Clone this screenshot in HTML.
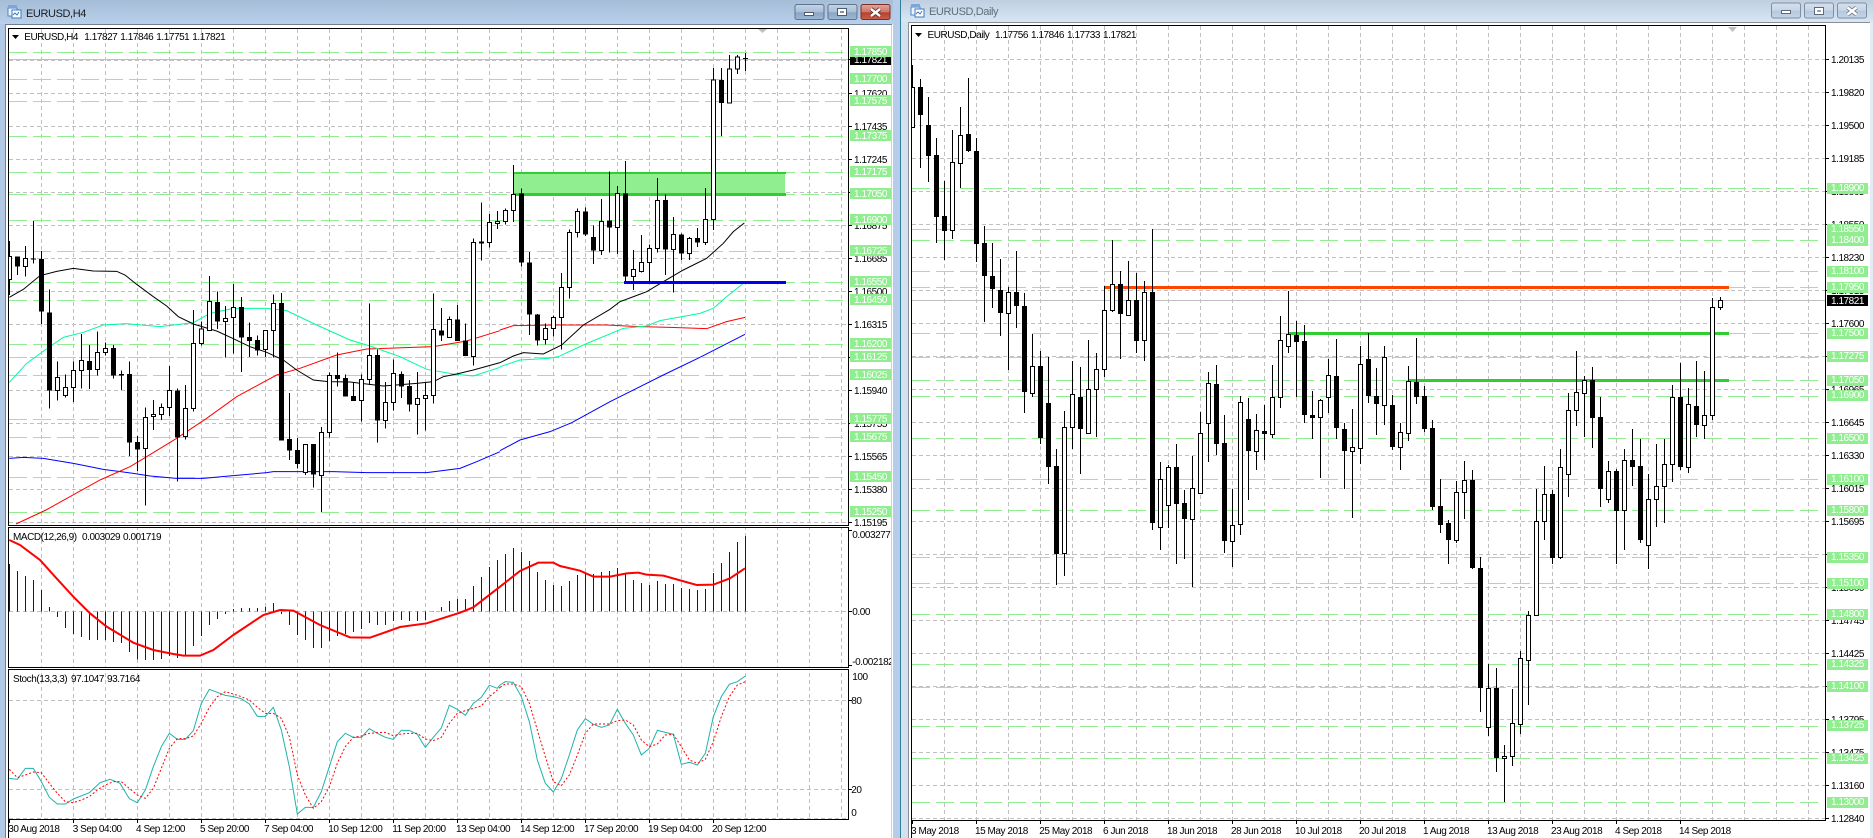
<!DOCTYPE html>
<html><head><meta charset="utf-8"><title>EURUSD charts</title>
<style>
html,body{margin:0;padding:0;background:#fff;width:1873px;height:838px;overflow:hidden}
svg{display:block;position:absolute;left:0;top:0}
svg path,svg polyline,svg rect,svg line{vector-effect:non-scaling-stroke}
text{font-family:"Liberation Sans",Arial,sans-serif;font-size:10px;letter-spacing:-.45px;fill:#000}
.w text{fill:#fff}
.grid{fill:none;stroke:#c0c0c0;stroke-width:1;stroke-dasharray:4 3;shape-rendering:crispEdges}
.lvl{fill:none;stroke:#90ee90;stroke-width:1;stroke-dasharray:18 6;shape-rendering:crispEdges}
.wk{fill:none;stroke:#000;stroke-width:1;shape-rendering:crispEdges}
.bk{fill:#000;shape-rendering:crispEdges}
.wh{fill:#fff;stroke:#000;stroke-width:1;shape-rendering:crispEdges}
.ln{fill:none;stroke-width:1}
.ax{fill:none;stroke:#000;stroke-width:1;shape-rendering:crispEdges}
.lb{fill:#90ee90}
</style></head><body>
<svg width="1873" height="838" viewBox="0 0 1873 838" xmlns="http://www.w3.org/2000/svg">
<defs>
<linearGradient id="tA" x1="0" y1="0" x2="0" y2="1"><stop offset="0" stop-color="#a6bdd7"/><stop offset="1" stop-color="#b8d0eb"/></linearGradient>
<linearGradient id="tI" x1="0" y1="0" x2="0" y2="1"><stop offset="0" stop-color="#bfcfdf"/><stop offset="1" stop-color="#d8e6f4"/></linearGradient>
<linearGradient id="bA" x1="0" y1="0" x2="0" y2="1"><stop offset="0" stop-color="#c6d4e6"/><stop offset=".5" stop-color="#a9bdd6"/><stop offset=".55" stop-color="#8ba5c6"/><stop offset="1" stop-color="#9db7d6"/></linearGradient>
<linearGradient id="bR" x1="0" y1="0" x2="0" y2="1"><stop offset="0" stop-color="#e0a89e"/><stop offset=".5" stop-color="#cf7465"/><stop offset=".55" stop-color="#b8412f"/><stop offset="1" stop-color="#c9604c"/></linearGradient>
<linearGradient id="bI" x1="0" y1="0" x2="0" y2="1"><stop offset="0" stop-color="#d6e1ee"/><stop offset=".5" stop-color="#c5d4e5"/><stop offset=".55" stop-color="#b5c8dd"/><stop offset="1" stop-color="#c4d6e9"/></linearGradient>
</defs>

<!-- frames -->
<rect x="0" y="0" width="1873" height="838" fill="#fff"/>
<rect x="0" y="0" width="893" height="24" fill="url(#tA)"/>
<rect x="0" y="24" width="5" height="814" fill="#b2cae6"/>
<rect x="893" y="0" width="7" height="838" fill="#b5cde8"/>
<rect x="5" y="24" width="887" height="1" fill="#6f7f8f"/>
<rect x="5" y="24" width="1" height="814" fill="#6f7f8f"/>
<rect x="891" y="25" width="1" height="813" fill="#d0d0d0"/>
<rect x="900" y="0" width="1" height="838" fill="#2f7f9a"/>
<rect x="901" y="0" width="972" height="22" fill="url(#tI)"/>
<rect x="901" y="22" width="7" height="816" fill="#d3e2f1"/>
<rect x="908" y="22" width="962" height="1" fill="#8a8f95"/>
<rect x="908" y="22" width="1" height="816" fill="#8a8f95"/>
<rect x="1870" y="22" width="3" height="816" fill="#e3ebf5"/>

<!-- title bars -->
<g>
<rect x="8" y="8" width="9" height="8" fill="#eef4fb" stroke="#4f86c6"/><rect x="8" y="5" width="9" height="3" fill="#7aa6dc"/>
<rect x="12" y="10" width="9" height="8" fill="#fff" stroke="#3f78be"/><path d="M13 15l2-2 2 2 2-3" fill="none" stroke="#3f78be"/>
<text x="26" y="17" style="font-size:11px;letter-spacing:-.4px;fill:#1c1c1c">EURUSD,H4</text>
<rect x="911" y="7" width="9" height="8" fill="#eef4fb" stroke="#4f86c6"/><rect x="911" y="4" width="9" height="3" fill="#7aa6dc"/>
<rect x="915" y="9" width="9" height="8" fill="#fff" stroke="#3f78be"/><path d="M916 14l2-2 2 2 2-3" fill="none" stroke="#3f78be"/>
<text x="929" y="15" style="font-size:11px;letter-spacing:-.4px;fill:#5f6d7c">EURUSD,Daily</text>
</g>
<!-- window buttons active -->
<rect x="795" y="4.500" width="29" height="15" rx="2" fill="url(#bA)" stroke="#5f748d"/>
<rect x="804.500" y="12.500" width="9" height="3" fill="#fff" stroke="#4c5c6e"/>
<rect x="828" y="4.500" width="29" height="15" rx="2" fill="url(#bA)" stroke="#5f748d"/>
<rect x="837.500" y="8.500" width="9" height="7" fill="#fff" stroke="#4c5c6e"/><rect x="840" y="11" width="4" height="2" fill="#7d95b2"/>
<rect x="861" y="4.500" width="29" height="15" rx="2" fill="url(#bR)" stroke="#7a2e24"/>
<path d="M871 9l9 7M880 9l-9 7" stroke="#5a2a22" stroke-width="4" fill="none"/><path d="M871 9l9 7M880 9l-9 7" stroke="#fff" stroke-width="2.400" fill="none"/>
<!-- window buttons inactive -->
<rect x="1771.500" y="3" width="29" height="15" rx="2" fill="url(#bI)" stroke="#7e8fa2"/>
<rect x="1781.500" y="10.500" width="9" height="3" fill="#fff" stroke="#5d6a79"/>
<rect x="1804.500" y="3" width="29" height="15" rx="2" fill="url(#bI)" stroke="#7e8fa2"/>
<rect x="1814.500" y="7.500" width="9" height="7" fill="#fff" stroke="#5d6a79"/><rect x="1817" y="10" width="4" height="2" fill="#93a6bb"/>
<rect x="1837.500" y="3" width="29" height="15" rx="2" fill="url(#bI)" stroke="#7e8fa2"/>
<path d="M1847.500 7.500l9 7M1856.500 7.500l-9 7" stroke="#6d7885" stroke-width="4" fill="none"/><path d="M1847.500 7.500l9 7M1856.500 7.500l-9 7" stroke="#fff" stroke-width="2.400" fill="none"/>

<!-- LEFT grid -->
<path class="grid" d="M9 60.500H848M9 93.500H848M9 126.500H848M9 159.500H848M9 192.500H848M9 225.500H848M9 258.500H848M9 291.500H848M9 324.500H848M9 357.500H848M9 390.500H848M9 423.500H848M9 456.500H848M9 489.500H848M9 522.500H848M9 611.500H848M9 700.500H848M9 789.500H848M9 818.500H848"/>
<path class="grid" d="M41.500 29V819M73.500 29V819M105.500 29V819M137.500 29V819M169.500 29V819M201.500 29V819M233.500 29V819M265.500 29V819M297.500 29V819M329.500 29V819M361.500 29V819M393.500 29V819M425.500 29V819M457.500 29V819M489.500 29V819M521.500 29V819M553.500 29V819M585.500 29V819M617.500 29V819M649.500 29V819M681.500 29V819M713.500 29V819M745.500 29V819M777.500 29V819M809.500 29V819M841.500 29V819"/>
<path d="M9 59.500H848" stroke="#c0c0c0" fill="none" shape-rendering="crispEdges"/>
<path class="lvl" d="M9 52.500H843M9 79.500H843M9 101.500H843M9 136.500H843M9 172.500H843M9 194.500H843M9 220.500H843M9 251.500H843M9 282.500H843M9 300.500H843M9 344.500H843M9 357.500H843M9 375.500H843M9 419.500H843M9 437.500H843M9 477.500H843M9 512.500H843"/>
<!-- rectangle zone -->
<rect x="513" y="172" width="272" height="22" fill="#90ee90"/>
<rect x="513" y="172" width="273" height="2" fill="#32cd32"/>
<rect x="513" y="193" width="273" height="3" fill="#32cd32"/>

<!-- MAs -->
<g transform="translate(0 180) scale(.33333)">
<polyline class="ln" stroke="#0000ff" points="28,835 70,832 130,835 220,850 310,868 400,880 450,888 530,895 610,895 700,887 800,878 820,875 1000,875 1100,878 1280,878 1380,865 1430,845 1500,815"/>
<polyline class="ln" stroke="#ff0000" points="48,1032 138,990 300,900 390,860 440,830 530,775 620,715 710,650 830,585 900,565 1010,525 1100,507 1300,500 1400,483 1500,452"/>
<polyline class="ln" stroke="#00fa9a" points="28,607 80,550 135,510 190,472 250,457 310,435 380,431 480,440 580,428 630,400 700,385 800,385 860,392 950,435 1050,480 1110,498 1200,530 1280,568 1360,582 1420,588 1500,562"/>
<polyline class="ln" stroke="#000" points="28,352 70,328 120,287 170,274 220,265 280,273 350,274 375,285 410,313 460,350 500,378 535,410 580,432 650,453 700,476 750,500 800,517 850,540 890,570 940,600 985,605 1050,606 1150,618 1250,610 1300,605 1330,590 1370,582 1420,570 1500,548"/>
</g>
<g transform="translate(500 100) scale(.33333)">
<polyline class="ln" stroke="#0000ff" points="0,1052 60,1020 150,995 215,968 330,905 490,825 600,772 735,703"/>
<polyline class="ln" stroke="#ff0000" points="0,690 40,677 160,675 320,675 420,680 510,682 620,686 680,665 735,652"/>
<polyline class="ln" stroke="#00fa9a" points="0,800 60,780 145,775 175,770 250,735 370,685 440,678 480,662 600,640 640,625 680,590 730,550"/>
<polyline class="ln" stroke="#000" points="0,788 40,768 70,758 130,762 185,735 250,675 330,628 360,605 440,575 490,545 550,510 620,475 670,430 700,395 733,369"/>
</g>

<!-- LEFT candles A -->
<g transform="translate(0 180) scale(1 .33333)">
<path class="wk" d="M9.500 183V345M17.500 229V285M25.500 198V290M33.500 123V250M41.500 213V432M49.500 328V686M57.500 544V662M65.500 583V653M73.500 545V666M81.500 462V625M89.500 495V627M97.500 454V587M105.500 488V527M113.500 495V596M121.500 571V630M129.500 544V828M137.500 768V873M145.500 682V977M153.500 660V750M161.500 670V720M169.500 558V708M177.500 625V905M185.500 615V779M193.500 390V695M201.500 425V497M209.500 288V451M217.500 334V447M225.500 378V533M233.500 312V520M241.500 351V576M249.500 427V531M257.500 467V527M265.500 451V531M273.500 343V533M281.500 339V782M289.500 639V840M297.500 774V866M305.500 793V885M313.500 793V923M321.500 741V996M329.500 578V773M337.500 517V620M345.500 583V650M353.500 607V663M361.500 583V725M369.500 370V615M377.500 508V788M385.500 606V746M393.500 538V692M401.500 574V654M409.500 600V695M417.500 576V764M425.500 608V752M433.500 340V671M441.500 384V483M449.500 410V473M457.500 375V483M465.500 430V528M473.500 175V557M481.500 67V242M489.500 102V203M497.500 93V147"/>
<path class="bk" d="M15 229h5V260h-5zM31 235h5V239h-5zM39 237h5V395h-5zM47 397h5V632h-5zM87 543h5V570h-5zM111 504h5V587h-5zM119 582h5V587h-5zM127 582h5V788h-5zM135 786h5V809h-5zM175 632h5V773h-5zM215 366h5V425h-5zM239 381h5V473h-5zM247 471h5V483h-5zM255 480h5V511h-5zM279 369h5V782h-5zM287 777h5V812h-5zM295 810h5V852h-5zM311 792h5V884h-5zM335 585h5V597h-5zM343 594h5V650h-5zM351 648h5V663h-5zM375 525h5V722h-5zM399 582h5V620h-5zM407 618h5V674h-5zM439 451h5V467h-5zM455 418h5V483h-5zM463 481h5V528h-5zM479 184h5V190h-5z"/>
<path class="wh" d="M7.500 229h4V298h-4zM23.500 236h4V259h-4zM55.500 592h4V632h-4zM63.500 622h4V647h-4zM71.500 571h4V622h-4zM79.500 541h4V571h-4zM95.500 517h4V569h-4zM103.500 505h4V517h-4zM143.500 712h4V806h-4zM151.500 703h4V709h-4zM159.500 682h4V704h-4zM167.500 631h4V682h-4zM183.500 685h4V770h-4zM191.500 490h4V686h-4zM199.500 447h4V491h-4zM207.500 364h4V451h-4zM223.500 415h4V425h-4zM231.500 382h4V412h-4zM263.500 451h4V509h-4zM271.500 370h4V451h-4zM303.500 793h4V877h-4zM319.500 757h4V886h-4zM327.500 586h4V758h-4zM359.500 598h4V661h-4zM367.500 526h4V598h-4zM383.500 667h4V721h-4zM391.500 580h4V667h-4zM415.500 655h4V673h-4zM423.500 646h4V655h-4zM431.500 448h4V646h-4zM447.500 418h4V473h-4zM471.500 187h4V529h-4zM487.500 127h4V187h-4zM495.500 124h4V130h-4z"/>
</g>
<!-- LEFT candles B -->
<g transform="translate(0 100) scale(1 .33333)">
<path class="wk" d="M505.500 325V374M513.500 195V366M521.500 265V500M529.500 456V705M537.500 642V737M545.500 670V734M553.500 646V710M561.500 519V748M569.500 388V596M577.500 325V413M585.500 322V408M593.500 376V492M601.500 297V465M609.500 215V458M617.500 258V462M625.500 183V552M633.500 450V570M641.500 405V518M649.500 433V552M657.500 234V458M665.500 283V525M673.500 351V578M681.500 400V480M689.500 411V480M697.500 384V441M705.500 264V435M713.500 -96V390M721.500 -96V108M729.500 -135V9M737.500 -135V-78M745.500 -141V-87"/>
<path class="bk" d="M519 280h5V488h-5zM527 487h5V644h-5zM535 643h5V722h-5zM583 334h5V404h-5zM591 411h5V452h-5zM607 361h5V383h-5zM623 280h5V530h-5zM663 300h5V449h-5zM679 403h5V461h-5zM695 414h5V428h-5zM719 -60h5V9h-5zM743 -126h5V-123h-5z"/>
<path class="wh" d="M503.500 331h4V364h-4zM511.500 283h4V331h-4zM543.500 686h4V718h-4zM551.500 652h4V685h-4zM559.500 563h4V652h-4zM567.500 397h4V563h-4zM575.500 334h4V397h-4zM599.500 364h4V451h-4zM615.500 280h4V383h-4zM631.500 508h4V529h-4zM639.500 487h4V514h-4zM647.500 445h4V487h-4zM655.500 301h4V445h-4zM671.500 403h4V449h-4zM687.500 415h4V460h-4zM703.500 358h4V428h-4zM711.500 -60h4V358h-4zM727.500 -93h4V9h-4zM735.500 -129h4V-93h-4z"/>
</g>
<rect x="624" y="281" width="162" height="3" fill="#0000ee"/>
<polygon points="758,29 767,29 762.500,33" fill="#c0c0c0"/>

<!-- MACD -->
<g transform="translate(0 500) scale(1 .33333)">
<path fill="none" stroke="#0000ee" stroke-width="1" shape-rendering="crispEdges" d="M9.500 334V192M17.500 334V213M25.500 334V228M33.500 334V240M41.500 334V270M49.500 334V321M57.500 334V351M65.500 334V384M73.500 334V402M81.500 334V411M89.500 334V420M97.500 334V420M105.500 334V420M113.500 334V426M121.500 334V429M129.500 334V456M137.500 334V478M145.500 334V480M153.500 334V480M161.500 334V477M169.500 334V468M177.500 334V474M185.500 334V468M193.500 334V438M201.500 334V408M209.500 334V375M217.500 334V357M225.500 334V342M233.500 334V327M241.500 334V324M249.500 334V324M257.500 334V324M265.500 334V321M273.500 334V309M281.500 334V342M289.500 334V375M297.500 334V405M305.500 334V420M313.500 334V444M321.500 334V444M329.500 334V423M337.500 334V408M345.500 334V402M353.500 334V396M361.500 334V387M369.500 334V369M377.500 334V375M385.500 334V375M393.500 334V363M401.500 334V360M409.500 334V363M417.500 334V363M425.500 334V360M433.500 334V336M441.500 334V321M449.500 334V303M457.500 334V297M465.500 334V297M473.500 334V258M481.500 334V231M489.500 334V201M497.500 334V180M505.500 334V162M513.500 334V144M521.500 334V156M529.500 334V183M537.500 334V216M545.500 334V240M553.500 334V255M561.500 334V258M569.500 334V243M577.500 334V225M585.500 334V219M593.500 334V222M601.500 334V216M609.500 334V213M617.500 334V204M625.500 334V222M633.500 334V240M641.500 334V249M649.500 334V255M657.500 334V243M665.500 334V252M673.500 334V252M681.500 334V264M689.500 334V267M697.500 334V270M705.500 334V267M713.500 334V219M721.500 334V189M729.500 334V156M737.500 334V126M745.500 334V108"/>
</g>
<g transform="translate(0 500) scale(.33333)">
<polyline fill="none" stroke="#ff0000" stroke-width="2" points="28,120 60,135 120,180 165,230 220,290 270,340 320,380 400,428 460,450 520,462 550,467 600,467 640,450 700,405 790,345 840,330 880,332 960,375 1050,412 1110,413 1200,381 1280,370 1380,338 1420,322 1500,260"/>
<polyline class="ln" stroke="#20b2aa" points="28,835 52,838 76,805 100,805 124,845 148,892 172,912 196,912 220,897 268,878 300,848 330,838 360,850 388,896 412,908 436,870 460,800 484,740 508,700 532,718 556,718 580,692 604,610 628,568 676,586 700,590 724,596 748,612 772,649 796,649 820,622 844,690 868,800 892,942 916,922 940,922 964,875 988,800 1012,725 1036,700 1060,712 1084,712 1108,686 1132,700 1156,712 1180,718 1204,691 1228,691 1252,703 1276,742 1300,712 1324,684 1348,616 1372,628 1396,646 1420,610 1444,592 1468,556 1492,565 1500,555"/>
<polyline class="ln" stroke="#ff0000" stroke-dasharray="2 2" points="28,808 52,833 76,825 100,816 124,818 148,850 172,880 196,905 220,908 244,900 268,890 292,870 316,855 340,845 364,845 388,865 412,885 436,895 460,865 484,805 508,745 532,716 556,716 580,708 604,670 628,622 652,590 676,575 700,582 724,590 748,600 772,622 796,640 820,640 844,655 868,710 892,825 916,885 940,925 964,905 988,860 1012,790 1036,740 1060,712 1084,708 1108,700 1132,698 1156,697 1180,707 1204,702 1228,700 1252,700 1276,717 1300,722 1324,712 1348,670 1372,640 1396,632 1420,625 1444,618 1468,590 1492,570 1500,562"/>
</g>
<g transform="translate(500 500) scale(.33333)">
<polyline fill="none" stroke="#ff0000" stroke-width="2" points="0,260 60,213 115,188 160,188 180,198 240,212 280,230 330,230 380,220 415,218 440,224 490,227 590,255 640,254 690,235 735,205"/>
<polyline class="ln" stroke="#20b2aa" points="0,555 16,545 40,547 64,590 88,665 112,780 136,850 160,876 184,836 208,765 232,690 256,656 280,673 304,682 328,675 352,628 376,670 400,705 424,765 448,745 472,691 496,697 520,703 544,793 568,787 592,795 616,760 640,650 664,590 688,553 712,545 736,528"/>
<polyline class="ln" stroke="#ff0000" stroke-dasharray="2 2" points="0,562 16,552 40,552 64,560 88,610 112,690 136,770 160,845 184,857 208,825 232,765 256,700 280,672 304,672 328,672 352,662 376,660 400,675 424,720 448,740 472,732 496,705 520,703 544,740 568,780 592,790 616,778 640,725 664,650 688,590 712,555 736,545"/>
</g>

<!-- LEFT borders -->
<rect x="6" y="25" width="2" height="813" fill="#fff"/>
<path class="ax" d="M8.500 28V838M8 28.500H849M848.500 28V819M8 525.500H849M8 527.500H849M8 667.500H849M8 669.500H849M8 819.500H849"/>
<rect x="8" y="526" width="841" height="1" fill="#fff"/><rect x="8" y="668" width="841" height="1" fill="#fff"/>
<path class="ax" d="M849 59.500h3M849 93.500h3M849 126.500h3M849 159.500h3M849 192.500h3M849 225.500h3M849 258.500h3M849 291.500h3M849 324.500h3M849 357.500h3M849 390.500h3M849 423.500h3M849 456.500h3M849 489.500h3M849 522.500h3M849 530.500h3M849 611.500h3M849 665.500h3M849 700.500h3M849 789.500h3M9.500 820v3M73.500 820v3M137.500 820v3M201.500 820v3M265.500 820v3M329.500 820v3M393.500 820v3M457.500 820v3M521.500 820v3M585.500 820v3M649.500 820v3M713.500 820v3"/>
<polygon points="12,35 19,35 15.500,39" fill="#000"/>
<g>
<text x="24.300" y="40">EURUSD,H4</text><text x="84.300" y="40">1.17827</text><text x="120.300" y="40">1.17846</text><text x="156.300" y="40">1.17751</text><text x="192.300" y="40">1.17821</text>
<text x="13" y="540">MACD(12,26,9)</text><text x="82" y="540">0.003029</text><text x="123" y="540">0.001719</text>
<text x="13" y="682">Stoch(13,3,3)</text><text x="71" y="682">97.1047</text><text x="107" y="682">93.7164</text>
</g>
<!-- LEFT axis -->
<g>
<text x="854" y="97">1.17620</text><text x="854" y="130">1.17435</text><text x="854" y="163">1.17245</text><text x="854" y="229">1.16875</text><text x="854" y="262">1.16685</text><text x="854" y="295">1.16500</text><text x="854" y="328">1.16315</text><text x="854" y="394">1.15940</text><text x="854" y="427">1.15755</text><text x="854" y="460">1.15565</text><text x="854" y="493">1.15380</text><text x="854" y="526">1.15195</text>
<text x="852.300" y="538">0.003277</text><text x="852.300" y="615">0.00</text>
<svg x="849" y="650" width="42" height="20" overflow="hidden"><text x="3.300" y="15">-0.002182</text></svg>
<text x="852.300" y="680">100</text><text x="851.300" y="704">80</text><text x="851.300" y="793">20</text><text x="851.300" y="816">0</text>
</g>
<rect x="850" y="54" width="41" height="11" fill="#000"/><text x="854" y="63" style="fill:#fff">1.17821</text>
<path class="lb" d="M850 46h41v11h-41zM850 73h41v11h-41zM850 95h41v11h-41zM850 130h41v11h-41zM850 166h41v11h-41zM850 188h41v11h-41zM850 214h41v11h-41zM850 245h41v11h-41zM850 276h41v11h-41zM850 294h41v11h-41zM850 338h41v11h-41zM850 351h41v11h-41zM850 369h41v11h-41zM850 413h41v11h-41zM850 431h41v11h-41zM850 471h41v11h-41zM850 506h41v11h-41z"/>
<g class="w">
<text x="854" y="55">1.17850</text><text x="854" y="82">1.17700</text><text x="854" y="104">1.17575</text><text x="854" y="139">1.17375</text><text x="854" y="175">1.17175</text><text x="854" y="197">1.17050</text><text x="854" y="223">1.16900</text><text x="854" y="254">1.16725</text><text x="854" y="285">1.16550</text><text x="854" y="303">1.16450</text><text x="854" y="347">1.16200</text><text x="854" y="360">1.16125</text><text x="854" y="378">1.16025</text><text x="854" y="422">1.15775</text><text x="854" y="440">1.15675</text><text x="854" y="480">1.15450</text><text x="854" y="515">1.15250</text>
</g>
<g>
<text x="8.300" y="832">30 Aug 2018</text><text x="72.700" y="832">3 Sep 04:00</text><text x="136" y="832">4 Sep 12:00</text><text x="200" y="832">5 Sep 20:00</text><text x="264" y="832">7 Sep 04:00</text><text x="328.300" y="832">10 Sep 12:00</text><text x="392.300" y="832">11 Sep 20:00</text><text x="456" y="832">13 Sep 04:00</text><text x="520" y="832">14 Sep 12:00</text><text x="584" y="832">17 Sep 20:00</text><text x="648" y="832">19 Sep 04:00</text><text x="712" y="832">20 Sep 12:00</text>
</g>

<!-- RIGHT grid -->
<path class="grid" d="M912 59.500H1825M912 92.500H1825M912 125.500H1825M912 158.500H1825M912 191.500H1825M912 224.500H1825M912 257.500H1825M912 290.500H1825M912 323.500H1825M912 356.500H1825M912 389.500H1825M912 422.500H1825M912 455.500H1825M912 488.500H1825M912 521.500H1825M912 554.500H1825M912 587.500H1825M912 620.500H1825M912 653.500H1825M912 686.500H1825M912 719.500H1825M912 752.500H1825M912 785.500H1825M912 818.500H1825"/>
<path class="grid" d="M944.500 26V820M976.500 26V820M1008.500 26V820M1040.500 26V820M1072.500 26V820M1104.500 26V820M1136.500 26V820M1168.500 26V820M1200.500 26V820M1232.500 26V820M1264.500 26V820M1296.500 26V820M1328.500 26V820M1360.500 26V820M1392.500 26V820M1424.500 26V820M1456.500 26V820M1488.500 26V820M1520.500 26V820M1552.500 26V820M1584.500 26V820M1616.500 26V820M1648.500 26V820M1680.500 26V820M1712.500 26V820M1744.500 26V820M1776.500 26V820M1808.500 26V820"/>
<path d="M912 300.500H1825" stroke="#c0c0c0" fill="none" shape-rendering="crispEdges"/>
<path class="lvl" d="M912 188.500H1818M912 229.500H1818M912 240.500H1818M912 271.500H1818M912 287.500H1818M912 333.500H1818M912 357.500H1818M912 380.500H1818M912 396.500H1818M912 438.500H1818M912 479.500H1818M912 510.500H1818M912 557.500H1818M912 583.500H1818M912 614.500H1818M912 664.500H1818M912 687.500H1818M912 726.500H1818M912 758.500H1818M912 802.500H1818"/>
<rect x="1105" y="286" width="624" height="3" fill="#ff4500"/>
<rect x="1289" y="332" width="440" height="3" fill="#32cd32"/>
<rect x="1408" y="379" width="321" height="3" fill="#32cd32"/>
<polygon points="1728,27 1737,27 1732.500,32" fill="#c0c0c0"/>

<!-- RIGHT candles -->
<path class="wk" d="M912.500 65V127M920.500 79V168M928.500 97V182M936.500 138V243M944.500 181V260M952.500 130V239M960.500 107V188M968.500 78V152M976.500 138V262M984.500 226V322M992.500 243V308M1000.500 259V336M1008.500 287V370M1016.500 251V328M1024.500 293V413M1032.500 334V397M1040.500 351V444M1048.500 357V484M1056.500 449V585M1064.500 411V576M1072.500 361V449M1080.500 367V474M1088.500 340V433M1096.500 353V437M1104.500 286V377M1112.500 240V312M1120.500 271V359M1128.500 261V315M1136.500 273V353M1144.500 281V361M1152.500 229V530M1160.500 462V550M1168.500 465V528M1176.500 444V564M1184.500 490V559M1192.500 456V587M1200.500 412V493M1208.500 372V462M1216.500 365V455M1224.500 415V553M1232.500 489V567M1240.500 396V535M1248.500 398V500M1256.500 414V470M1264.500 405V460M1272.500 365V438M1280.500 316V408M1288.500 291V353M1296.500 321V397M1304.500 325V423M1312.500 391V439M1320.500 399V478M1328.500 359V413M1336.500 339V439M1344.500 423V489M1352.500 409V518M1360.500 346V464M1368.500 333V403M1376.500 368V435M1384.500 346V425M1392.500 395V450M1400.500 423V470M1408.500 366V441M1416.500 338V404M1424.500 386V432M1432.500 420V510M1440.500 479V533M1448.500 520V564M1456.500 481V543M1464.500 461V519M1472.500 470V569M1480.500 557V712M1488.500 664V736M1496.500 668V772M1504.500 745V802M1512.500 689V766M1520.500 651V734M1528.500 611V705M1536.500 489V615M1544.500 466V540M1552.500 490V564M1560.500 449V559M1568.500 393V497M1576.500 351V426M1584.500 376V437M1592.500 367V448M1600.500 397V507M1608.500 461V503M1616.500 469V564M1624.500 449V550M1632.500 429V486M1640.500 439V543M1648.500 474V569M1656.500 444V527M1664.500 439V523M1672.500 385V482M1680.500 363V470M1688.500 388V473M1696.500 361V437M1704.500 371V439M1712.500 298V420M1720.500 297V310"/>
<path class="bk" d="M918 87h5V115h-5zM926 125h5V156h-5zM934 155h5V217h-5zM942 216h5V231h-5zM966 134h5V151h-5zM974 151h5V244h-5zM982 243h5V276h-5zM990 276h5V289h-5zM998 290h5V313h-5zM1014 292h5V306h-5zM1022 306h5V392h-5zM1038 366h5V438h-5zM1046 403h5V467h-5zM1054 466h5V554h-5zM1078 397h5V429h-5zM1118 284h5V314h-5zM1134 300h5V341h-5zM1150 292h5V523h-5zM1174 467h5V504h-5zM1182 503h5V519h-5zM1214 384h5V444h-5zM1222 443h5V541h-5zM1246 419h5V451h-5zM1262 431h5V434h-5zM1294 335h5V342h-5zM1302 341h5V415h-5zM1310 415h5V418h-5zM1334 376h5V428h-5zM1342 429h5V451h-5zM1366 359h5V396h-5zM1374 396h5V404h-5zM1390 405h5V447h-5zM1414 382h5V397h-5zM1422 396h5V429h-5zM1430 428h5V507h-5zM1438 506h5V525h-5zM1446 523h5V540h-5zM1470 480h5V568h-5zM1478 568h5V688h-5zM1494 688h5V758h-5zM1550 494h5V558h-5zM1590 380h5V418h-5zM1598 417h5V489h-5zM1614 471h5V511h-5zM1630 460h5V467h-5zM1638 466h5V540h-5zM1678 397h5V467h-5zM1694 406h5V425h-5z"/>
<path class="wh" d="M910.500 87.500h4V127.500h-4zM950.500 162.500h4V230.500h-4zM958.500 135.500h4V163.500h-4zM1006.500 292.500h4V313.500h-4zM1030.500 366.500h4V393.500h-4zM1062.500 427.500h4V553.500h-4zM1070.500 394.500h4V427.500h-4zM1086.500 389.500h4V433.500h-4zM1094.500 369.500h4V389.500h-4zM1102.500 310.500h4V369.500h-4zM1110.500 284.500h4V310.500h-4zM1126.500 300.500h4V315.500h-4zM1142.500 292.500h4V340.500h-4zM1158.500 479.500h4V527.500h-4zM1166.500 467.500h4V505.500h-4zM1190.500 488.500h4V519.500h-4zM1198.500 433.500h4V493.500h-4zM1206.500 383.500h4V423.500h-4zM1230.500 525.500h4V541.500h-4zM1238.500 402.500h4V524.500h-4zM1254.500 430.500h4V451.500h-4zM1270.500 397.500h4V434.500h-4zM1278.500 340.500h4V397.500h-4zM1286.500 334.500h4V346.500h-4zM1318.500 400.500h4V417.500h-4zM1326.500 375.500h4V397.500h-4zM1350.500 447.500h4V451.500h-4zM1358.500 364.500h4V448.500h-4zM1382.500 357.500h4V405.500h-4zM1398.500 432.500h4V447.500h-4zM1406.500 381.500h4V433.500h-4zM1454.500 492.500h4V540.500h-4zM1462.500 480.500h4V492.500h-4zM1486.500 688.500h4V727.500h-4zM1502.500 756.500h4V758.500h-4zM1510.500 723.500h4V756.500h-4zM1518.500 658.500h4V724.500h-4zM1526.500 615.500h4V660.500h-4zM1534.500 521.500h4V615.500h-4zM1542.500 494.500h4V521.500h-4zM1558.500 467.500h4V557.500h-4zM1566.500 410.500h4V474.500h-4zM1574.500 392.500h4V410.500h-4zM1582.500 380.500h4V393.500h-4zM1606.500 471.500h4V499.500h-4zM1622.500 460.500h4V510.500h-4zM1646.500 499.500h4V545.500h-4zM1654.500 486.500h4V499.500h-4zM1662.500 464.500h4V486.500h-4zM1670.500 397.500h4V464.500h-4zM1686.500 404.500h4V467.500h-4zM1702.500 415.500h4V425.500h-4zM1710.500 307.500h4V415.500h-4zM1718.500 300.500h4V307.500h-4z"/>

<!-- RIGHT borders -->
<rect x="909" y="23" width="2" height="815" fill="#fff"/>
<path class="ax" d="M911.500 25V838M911 25.500H1826M1825.500 25V820M911 820.500H1826"/>
<path class="ax" d="M1826 59.500h3M1826 92.500h3M1826 125.500h3M1826 158.500h3M1826 191.500h3M1826 224.500h3M1826 257.500h3M1826 290.500h3M1826 323.500h3M1826 356.500h3M1826 389.500h3M1826 422.500h3M1826 455.500h3M1826 488.500h3M1826 521.500h3M1826 554.500h3M1826 587.500h3M1826 620.500h3M1826 653.500h3M1826 686.500h3M1826 719.500h3M1826 752.500h3M1826 785.500h3M1826 818.500h3M912.500 821v3M976.500 821v3M1040.500 821v3M1104.500 821v3M1168.500 821v3M1232.500 821v3M1296.500 821v3M1360.500 821v3M1424.500 821v3M1488.500 821v3M1552.500 821v3M1616.500 821v3M1680.500 821v3"/>
<polygon points="915,33 922,33 918.500,37" fill="#000"/>
<text x="927.500" y="38">EURUSD,Daily</text><text x="995" y="38">1.17756</text><text x="1031" y="38">1.17846</text><text x="1067" y="38">1.17733</text><text x="1103" y="38">1.17821</text>
<g>
<text x="1831" y="63">1.20135</text><text x="1831" y="96">1.19820</text><text x="1831" y="129">1.19500</text><text x="1831" y="162">1.19185</text><text x="1831" y="195">1.18865</text><text x="1831" y="228">1.18550</text><text x="1831" y="261">1.18230</text><text x="1831" y="294">1.17915</text><text x="1831" y="327">1.17600</text><text x="1831" y="393">1.16965</text><text x="1831" y="426">1.16645</text><text x="1831" y="459">1.16330</text><text x="1831" y="492">1.16015</text><text x="1831" y="525">1.15695</text><text x="1831" y="591">1.15060</text><text x="1831" y="624">1.14745</text><text x="1831" y="657">1.14425</text><text x="1831" y="723">1.13795</text><text x="1831" y="756">1.13475</text><text x="1831" y="789">1.13160</text><text x="1831" y="822">1.12840</text>
</g>
<path class="lb" d="M1827 183h41v11h-41zM1827 224h41v11h-41zM1827 235h41v11h-41zM1827 266h41v11h-41zM1827 282h41v11h-41zM1827 328h41v11h-41zM1827 351h41v11h-41zM1827 375h41v11h-41zM1827 390h41v11h-41zM1827 433h41v11h-41zM1827 474h41v11h-41zM1827 505h41v11h-41zM1827 552h41v11h-41zM1827 578h41v11h-41zM1827 609h41v11h-41zM1827 659h41v11h-41zM1827 681h41v11h-41zM1827 720h41v11h-41zM1827 753h41v11h-41zM1827 797h41v11h-41z"/>
<rect x="1827" y="295" width="41" height="11" fill="#000"/><text x="1831" y="304" style="fill:#fff">1.17821</text>
<g class="w">
<text x="1831" y="191">1.18900</text><text x="1831" y="232">1.18550</text><text x="1831" y="243">1.18400</text><text x="1831" y="274">1.18100</text><text x="1831" y="290">1.17950</text><text x="1831" y="336">1.17500</text><text x="1831" y="359">1.17275</text><text x="1831" y="383">1.17050</text><text x="1831" y="398">1.16900</text><text x="1831" y="441">1.16500</text><text x="1831" y="482">1.16100</text><text x="1831" y="513">1.15800</text><text x="1831" y="560">1.15350</text><text x="1831" y="586">1.15100</text><text x="1831" y="617">1.14800</text><text x="1831" y="667">1.14325</text><text x="1831" y="689">1.14100</text><text x="1831" y="728">1.13725</text><text x="1831" y="761">1.13425</text><text x="1831" y="805">1.13000</text>
</g>
<g>
<text x="911" y="834">3 May 2018</text><text x="975" y="834">15 May 2018</text><text x="1039.300" y="834">25 May 2018</text><text x="1103" y="834">6 Jun 2018</text><text x="1167" y="834">18 Jun 2018</text><text x="1231" y="834">28 Jun 2018</text><text x="1295" y="834">10 Jul 2018</text><text x="1359" y="834">20 Jul 2018</text><text x="1423" y="834">1 Aug 2018</text><text x="1487" y="834">13 Aug 2018</text><text x="1551" y="834">23 Aug 2018</text><text x="1615" y="834">4 Sep 2018</text><text x="1679" y="834">14 Sep 2018</text>
</g>
</svg>
</body></html>
